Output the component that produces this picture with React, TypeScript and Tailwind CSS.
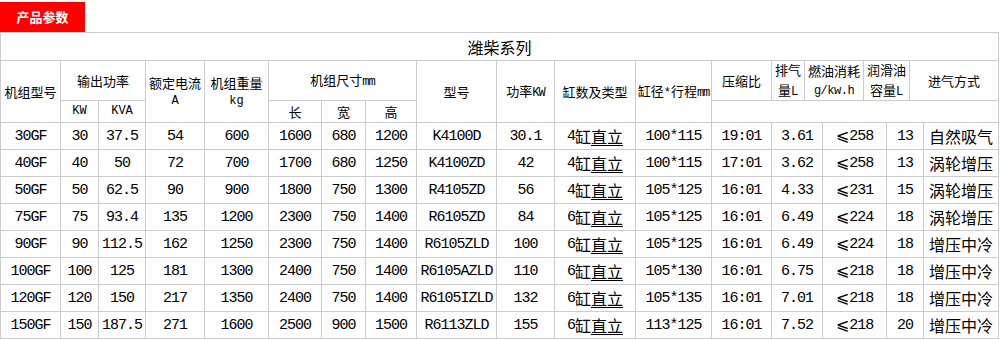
import React from "react";

const rows: string[][] = [
  ["30GF", "30", "37.5", "54", "600", "1600", "680", "1200", "K4100D", "30.1", "4", "100*115", "19:01", "3.61", "258", "13", "自然吸气"],
  ["40GF", "40", "50", "72", "700", "1700", "680", "1250", "K4100ZD", "42", "4", "100*115", "17:01", "3.62", "258", "13", "涡轮增压"],
  ["50GF", "50", "62.5", "90", "900", "1800", "750", "1300", "R4105ZD", "56", "4", "105*125", "16:01", "4.33", "231", "15", "涡轮增压"],
  ["75GF", "75", "93.4", "135", "1200", "2300", "750", "1400", "R6105ZD", "84", "6", "105*125", "16:01", "6.49", "224", "18", "涡轮增压"],
  ["90GF", "90", "112.5", "162", "1250", "2300", "750", "1400", "R6105ZLD", "100", "6", "105*125", "16:01", "6.49", "224", "18", "增压中冷"],
  ["100GF", "100", "125", "181", "1300", "2400", "750", "1400", "R6105AZLD", "110", "6", "105*130", "16:01", "6.75", "218", "18", "增压中冷"],
  ["120GF", "120", "150", "217", "1350", "2400", "750", "1400", "R6105IZLD", "132", "6", "105*135", "16:01", "7.01", "218", "18", "增压中冷"],
  ["150GF", "150", "187.5", "271", "1600", "2500", "900", "1500", "R6113ZLD", "155", "6", "113*125", "16:01", "7.52", "218", "20", "增压中冷"],
];

const hd =
  "bg-white flex flex-col items-center justify-center text-[13px] leading-[19px] text-black font-['Noto_Sans_CJK_SC',sans-serif]";
const hm = "font-['Liberation_Mono',monospace] text-[12px]";
const dc =
  "bg-white flex items-center justify-center text-black whitespace-nowrap";
const num = "font-['Liberation_Mono',monospace] text-[15px] tracking-[-1px] pt-[2px]";
const cjk = "font-['Noto_Sans_CJK_SC',sans-serif] text-[16px]";

export default function App() {
  return (
    <div className="w-[1002px] h-[340px] bg-white overflow-hidden">
      <div className="mt-[2px] w-[85px] h-[30px] bg-[#ff0000] flex items-center justify-center text-white text-[13px] font-bold font-['Noto_Sans_CJK_SC',sans-serif]">
        产品参数
      </div>
      <div className="w-[999px] grid bg-[#cccccc] p-px gap-px grid-cols-[59px_37px_46px_58px_63px_52px_43px_50px_79px_57px_80px_75px_59px_32px_17px_40px_22px_22px_13px_74px] grid-rows-[27px_39px_21px_repeat(8,26px)]">
        <div className="col-span-20 bg-white flex items-center justify-center text-[16px] text-black font-['Noto_Sans_CJK_SC',sans-serif]">
          潍柴系列
        </div>
        <div className={`${hd} row-span-2`}>机组型号</div>
        <div className={`${hd} col-span-2`}>输出功率</div>
        <div className={`${hd} row-span-2`}>
          <span>额定电流</span>
          <span className={hm}>A</span>
        </div>
        <div className={`${hd} row-span-2`}>
          <span>机组重量</span>
          <span className={hm}>kg</span>
        </div>
        <div className={`${hd} col-span-3`}>
          <span>
            机组尺寸<span className={`${hm} tracking-[-1px]`}>mm</span>
          </span>
        </div>
        <div className={`${hd} row-span-2`}>型号</div>
        <div className={`${hd} row-span-2`}>
          <span>
            功率<span className={`${hm} tracking-[-1px]`}>KW</span>
          </span>
        </div>
        <div className={`${hd} row-span-2`}>缸数及类型</div>
        <div className={`${hd} row-span-2`}>
          <span className="whitespace-nowrap">
            缸径<span className={hm}>*</span>行程<span className={`${hm} tracking-[-1px]`}>mm</span>
          </span>
        </div>
        <div className={hd}>压缩比</div>
        <div className={`${hd} leading-[20px]`}>
          <span>排气</span>
          <span>
            量<span className={hm}>L</span>
          </span>
        </div>
        <div className={`${hd} col-span-2 leading-[20px]`}>
          <span>燃油消耗</span>
          <span className={`${hm} tracking-[-0.5px]`}>g/kw.h</span>
        </div>
        <div className={`${hd} col-span-2 leading-[20px]`}>
          <span>润滑油</span>
          <span>
            容量<span className={hm}>L</span>
          </span>
        </div>
        <div className={`${hd} col-span-2`}>进气方式</div>
        <div className={hd}>
          <span className={hm}>KW</span>
        </div>
        <div className={hd}>
          <span className={hm}>KVA</span>
        </div>
        <div className={hd}>长</div>
        <div className={hd}>宽</div>
        <div className={hd}>高</div>
        <div className={`${hd} col-span-8`}></div>
        {rows.map((r) => (
          <React.Fragment key={r[0]}>
            {r.slice(0, 10).map((v, i) => (
              <div key={i} className={dc}>
                <span className={num}>{v}</span>
              </div>
            ))}
            <div className={dc}>
              <span className={num}>{r[10]}</span>
              <span className={cjk}>
                缸<span className="underline underline-offset-2">直立</span>
              </span>
            </div>
            <div className={dc}>
              <span className={num}>{r[11]}</span>
            </div>
            <div className={dc}>
              <span className={num}>{r[12]}</span>
            </div>
            <div className={`${dc} col-span-2`}>
              <span className={num}>{r[13]}</span>
            </div>
            <div className={`${dc} col-span-2`}>
              <span className="font-['DejaVu_Sans',sans-serif] text-[16px]">⩽</span>
              <span className={num}>{r[14]}</span>
            </div>
            <div className={`${dc} col-span-2`}>
              <span className={num}>{r[15]}</span>
            </div>
            <div className={dc}>
              <span className={cjk}>{r[16]}</span>
            </div>
          </React.Fragment>
        ))}
      </div>
    </div>
  );
}
